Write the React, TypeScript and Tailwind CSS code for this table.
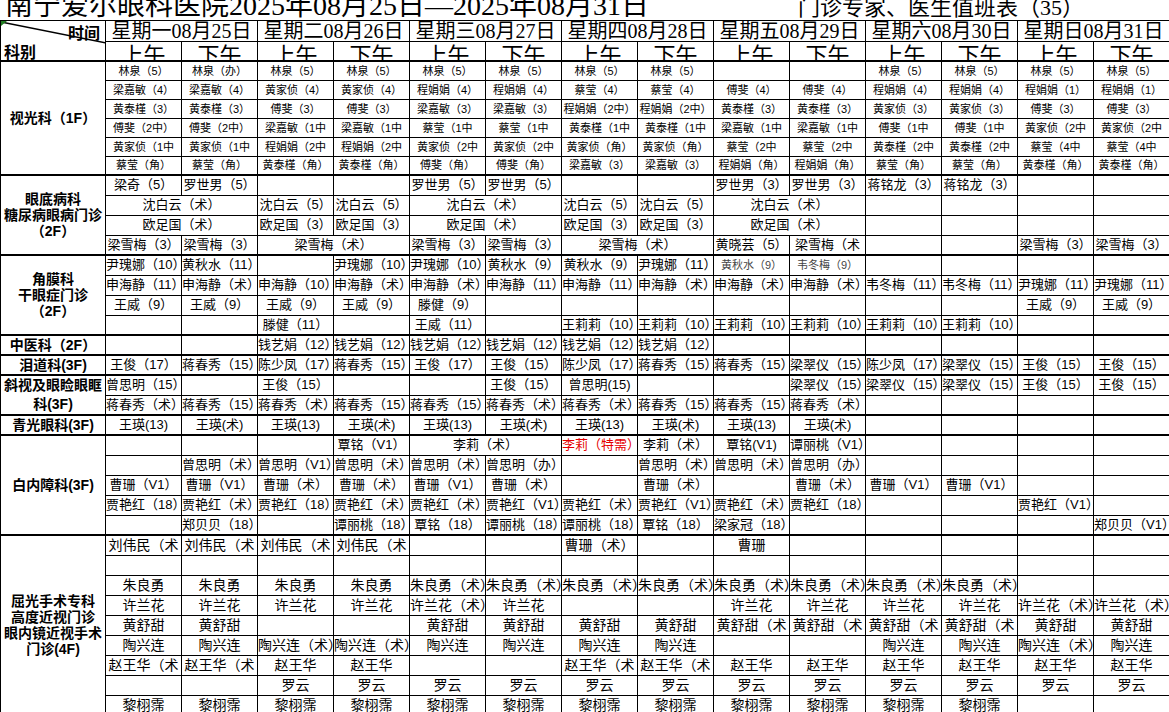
import React from 'react';
import clsx from 'clsx';

const COLS = 14;

type Cell = { t: string; span: number; red: boolean; small: boolean };

type Group = {
  label: string[];
  font: string;
  h: string;
  lead: string;
  rows: string[];
};

// "a|b|c" = one cell per slot; "*2" = spans both halves of a day; "!" = red; "~" = small grey
function parse(row: string): Cell[] {
  const out: Cell[] = [];
  let used = 0;
  for (const raw of row.split('|')) {
    let t = raw;
    let span = 1;
    let red = false;
    let small = false;
    if (t.endsWith('*2')) {
      span = 2;
      t = t.slice(0, -2);
    }
    if (t.startsWith('!')) {
      red = true;
      t = t.slice(1);
    }
    if (t.startsWith('~')) {
      small = true;
      t = t.slice(1);
    }
    out.push({ t, span, red, small });
    used += span;
  }
  while (used < COLS) {
    out.push({ t: '', span: 1, red: false, small: false });
    used++;
  }
  return out;
}

const DAYS = [
  '星期一08月25日',
  '星期二08月26日',
  '星期三08月27日',
  '星期四08月28日',
  '星期五08月29日',
  '星期六08月30日',
  '星期日08月31日',
];

const GROUPS: Group[] = [
  {
    label: ['视光科（1F）'],
    font: 'text-[11px]',
    h: 'h-[19px]',
    lead: 'leading-[16px]',
    rows: [
      '林泉（5）|林泉（办）|林泉（5）|林泉（5）|林泉（5）|林泉（5）|林泉（5）|林泉（5）|||林泉（5）|林泉（5）|林泉（5）|林泉（5）',
      '梁嘉敏（4）|梁嘉敏（4）|黄家侦（4）|黄家侦（4）|程娟娟（4）|程娟娟（4）|蔡莹（4）|蔡莹（4）|傅斐（4）|傅斐（4）|程娟娟（4）|程娟娟（4）|程娟娟（1）|程娟娟（1）',
      '黄泰槿（3）|黄泰槿（3）|傅斐（3）|傅斐（3）|梁嘉敏（3）|梁嘉敏（3）|程娟娟（2中）|程娟娟（2中）|黄泰槿（3）|黄泰槿（3）|黄家侦（3）|黄家侦（3）|傅斐（3）|傅斐（3）',
      '傅斐（2中）|傅斐（2中）|梁嘉敏（1中|梁嘉敏（1中|蔡莹（1中|蔡莹（1中|黄泰槿（1中|黄泰槿（1中|梁嘉敏（1中|梁嘉敏（1中|傅斐（1中|傅斐（1中|黄家侦（2中|黄家侦（2中',
      '黄家侦（1中|黄家侦（1中|程娟娟（2中|程娟娟（2中|黄家侦（2中|黄家侦（2中|黄家侦（角）|黄家侦（角）|蔡莹（2中|蔡莹（2中|黄泰槿（2中|黄泰槿（2中|蔡莹（4中|蔡莹（4中',
      '蔡莹（角）|蔡莹（角）|黄泰槿（角）|黄泰槿（角）|傅斐（角）|傅斐（角）|梁嘉敏（3）|梁嘉敏（3）|程娟娟（角）|程娟娟（角）|蔡莹（角）|蔡莹（角）|黄泰槿（角）|黄泰槿（角）',
    ],
  },
  {
    label: ['眼底病科', '糖尿病眼病门诊', '（2F）'],
    font: 'text-[13px]',
    h: 'h-[20px]',
    lead: 'leading-[16px]',
    rows: [
      '梁奇（5）|罗世男（5）|||罗世男（5）|罗世男（5）|||罗世男（3）|罗世男（3）|蒋铭龙（3）|蒋铭龙（3）||',
      '沈白云（术）*2|沈白云（5）|沈白云（5）|沈白云（术）*2|沈白云（5）|沈白云（5）|沈白云（术）*2||||',
      '欧足国（术）*2|欧足国（3）|欧足国（3）|欧足国（术）*2|欧足国（3）|欧足国（3）|欧足国（术）*2||||',
      '梁雪梅（3）|梁雪梅（3）|梁雪梅（术）*2|梁雪梅（3）|梁雪梅（3）|梁雪梅（术）*2|黄晓芸（5）|梁雪梅（术|||梁雪梅（3）|梁雪梅（3）',
    ],
  },
  {
    label: ['角膜科', '干眼症门诊', '（2F）'],
    font: 'text-[13px]',
    h: 'h-[20px]',
    lead: 'leading-[16px]',
    rows: [
      '尹瑰娜（10）|黄秋水（11）||尹瑰娜（10）|尹瑰娜（10）|黄秋水（9）|黄秋水（9）|尹瑰娜（11）|~黄秋水（9）|~韦冬梅（9）||||',
      '申海静（11）|申海静（术）|申海静（10）|申海静（术）|申海静（术）|申海静（11）|申海静（11）|申海静（术）|申海静（术）|申海静（术）|韦冬梅（11）|韦冬梅（11）|尹瑰娜（11）|尹瑰娜（11）',
      '王威（9）|王威（9）|王威（9）|王威（9）|滕健（9）||||||||王威（9）|王威（9）',
      '||滕健（11）||王威（11）||王莉莉（10）|王莉莉（10）|王莉莉（10）|王莉莉（10）|王莉莉（10）|王莉莉（10）||',
    ],
  },
  {
    label: ['中医科（2F）'],
    font: 'text-[13px]',
    h: 'h-[20px]',
    lead: 'leading-[16px]',
    rows: ['||钱艺娟（12）|钱艺娟（12）|钱艺娟（12）|钱艺娟（12）|钱艺娟（12）|钱艺娟（12）||||||'],
  },
  {
    label: ['泪道科(3F)'],
    font: 'text-[13px]',
    h: 'h-[20px]',
    lead: 'leading-[16px]',
    rows: [
      '王俊（17）|蒋春秀（15）|陈少凤（17）|蒋春秀（15）|王俊（17）|王俊（15）|陈少凤（17）|蒋春秀（15）|蒋春秀（15）|梁翠仪（15）|陈少凤（17）|梁翠仪（15）|王俊（15）|王俊（15）',
    ],
  },
  {
    label: ['斜视及眼睑眼眶', '科(3F)'],
    font: 'text-[13px]',
    h: 'h-[20px]',
    lead: 'leading-[19px]',
    rows: [
      '曾思明（15）||王俊（15）|||王俊（15）|曾思明(15)|||梁翠仪（15）|梁翠仪（15）|梁翠仪（15）|王俊（15）|王俊（15）',
      '蒋春秀（术）|蒋春秀（15）|蒋春秀（术）|蒋春秀（15）|蒋春秀（15）|蒋春秀（术）|蒋春秀（术）|蒋春秀（15）|蒋春秀（15）|蒋春秀（术）||||',
    ],
  },
  {
    label: ['青光眼科(3F)'],
    font: 'text-[13px]',
    h: 'h-[20px]',
    lead: 'leading-[16px]',
    rows: ['王瑛(13)|王瑛(术)|王瑛(13)|王瑛(术)|王瑛(13)|王瑛(术)|王瑛(13)|王瑛(术)|王瑛(13)|王瑛(术)||||'],
  },
  {
    label: ['白内障科(3F)'],
    font: 'text-[13px]',
    h: 'h-[20px]',
    lead: 'leading-[16px]',
    rows: [
      '|||覃铭（V1）|李莉（术）*2|!李莉（特需）|李莉（术）|覃铭(V1)|谭丽桃（V1）||||',
      '|曾思明（术）|曾思明（V1）|曾思明（术）|曾思明（术）|曾思明（办）||曾思明（术）|曾思明（术）|曾思明（办）||||',
      '曹珊（V1）|曹珊（V1）|曹珊（术）|曹珊（术）|曹珊（V1）|曹珊（术）||曹珊（术）||曹珊（术）|曹珊（V1）|曹珊（V1）||',
      '贾艳红（18）|贾艳红（术）|贾艳红（18）|贾艳红（术）|贾艳红（术）|贾艳红（V1）|贾艳红（术）|贾艳红（V1）|贾艳红（术）|贾艳红（18）|||贾艳红（V1）|',
      '|郑贝贝（18）||谭丽桃（18）|覃铭（18）|谭丽桃（18）|谭丽桃（18）|覃铭（18）|梁家冠（18）|||||郑贝贝（V1）',
    ],
  },
  {
    label: ['屈光手术专科', '高度近视门诊', '眼内镜近视手术', '门诊(4F)'],
    font: 'text-[14px]',
    h: 'h-[20px]',
    lead: 'leading-[16px]',
    rows: [
      '刘伟民（术|刘伟民（术|刘伟民（术|刘伟民（术|||曹珊（术）||曹珊|||||',
      '|||||||||||||',
      '朱良勇|朱良勇|朱良勇|朱良勇|朱良勇（术）|朱良勇（术）|朱良勇（术）|朱良勇（术）|朱良勇（术）|朱良勇（术）|朱良勇（术）|朱良勇（术）||',
      '许兰花|许兰花|许兰花|许兰花|许兰花（术）|许兰花|||许兰花|许兰花|许兰花|许兰花|许兰花（术）|许兰花（术）',
      '黄舒甜|黄舒甜|||黄舒甜|黄舒甜|黄舒甜|黄舒甜|黄舒甜（术|黄舒甜（术|黄舒甜（术|黄舒甜（术|黄舒甜|黄舒甜',
      '陶兴连|陶兴连|陶兴连（术）|陶兴连（术）|陶兴连|陶兴连|陶兴连|陶兴连|||陶兴连|陶兴连|陶兴连（术）|陶兴连',
      '赵王华（术|赵王华（术|赵王华|赵王华|||赵王华（术|赵王华（术|赵王华|赵王华|赵王华|赵王华|赵王华|赵王华',
      '||罗云|罗云|罗云|罗云|罗云|罗云|罗云|罗云|罗云|罗云|罗云|罗云',
      '黎栩霈|黎栩霈|黎栩霈|黎栩霈|黎栩霈|黎栩霈|黎栩霈|黎栩霈|黎栩霈|黎栩霈|黎栩霈|黎栩霈||',
    ],
  },
];

export default function App() {
  return (
    <div className="w-[1169px] bg-white text-black font-['Liberation_Sans','Noto_Sans_CJK_SC',sans-serif]">
      {/* Title */}
      <div className="flex h-[20px] items-start overflow-hidden whitespace-nowrap font-['Liberation_Serif','Noto_Sans_CJK_SC',serif]">
        <div className="w-[798px] pl-[5px] text-[28px] leading-[12px]">
          南宁爱尔眼科医院2025年08月25日—2025年08月31日
        </div>
        <div className="text-[22px] leading-[16px]">门诊专家、医生值班表（35）</div>
      </div>

      <table className="w-[1169px] table-fixed border-collapse">
        <colgroup>
          <col className="w-[105px]" />
          {Array.from({ length: COLS }).map((_, i) => (
            <col key={i} className="w-[76px]" />
          ))}
        </colgroup>
        <thead>
          <tr className="h-[21px]">
            <td rowSpan={2} className="relative overflow-hidden border border-b-2 border-black p-0 align-top">
              <svg className="absolute left-0 top-0" width="105" height="40" viewBox="0 0 105 40">
                <line x1="0" y1="1" x2="105" y2="22" stroke="#000" strokeWidth="1.6" />
                <polygon points="0,0 6,0 0,5" fill="#1f7a1f" />
              </svg>
              <div className="flex h-[39px] flex-col justify-between text-[16px] font-bold leading-[18px] font-['Noto_Sans_CJK_SC',sans-serif]">
                <span className="self-end pr-[5px] pt-[2px]">时间</span>
                <span className="self-start pl-[3px]">科别</span>
              </div>
            </td>
            {DAYS.map((d) => (
              <td
                key={d}
                colSpan={2}
                className="overflow-hidden whitespace-nowrap border border-black p-0 text-center text-[20px] leading-[20px] font-['Liberation_Serif','Noto_Sans_CJK_SC',serif]"
              >
                {d}
              </td>
            ))}
          </tr>
          <tr className="h-[19px]">
            {DAYS.map((d) => (
              <React.Fragment key={d}>
                <td className="overflow-hidden border border-b-2 border-black p-0 pt-[5px] text-center text-[22px] leading-[13px] font-['Noto_Sans_CJK_SC',serif]">
                  上午
                </td>
                <td className="overflow-hidden border border-b-2 border-black p-0 pt-[5px] text-center text-[22px] leading-[13px] font-['Noto_Sans_CJK_SC',serif]">
                  下午
                </td>
              </React.Fragment>
            ))}
          </tr>
        </thead>
        <tbody>
          {GROUPS.map((g, gi) =>
            g.rows.map((r, ri) => {
              const last = ri === g.rows.length - 1;
              return (
                <tr key={`${gi}-${ri}`} className={g.h}>
                  {ri === 0 && (
                    <td
                      rowSpan={g.rows.length}
                      className={clsx(
                        'border border-b-2 border-black p-0 text-center text-[14px] font-bold',
                        g.lead
                      )}
                    >
                      {g.label.map((l) => (
                        <div key={l} className="whitespace-nowrap">
                          {l}
                        </div>
                      ))}
                    </td>
                  )}
                  {parse(r).map((c, ci) => (
                    <td
                      key={ci}
                      colSpan={c.span}
                      className={clsx(
                        'overflow-hidden whitespace-nowrap border border-black p-0 text-center leading-[16px]',
                        last && 'border-b-2',
                        c.small ? 'text-[11px]' : g.font,
                        c.red ? 'text-[#e60000]' : c.small ? 'text-[#444444]' : 'text-black'
                      )}
                    >
                      {c.t}
                    </td>
                  ))}
                </tr>
              );
            })
          )}
        </tbody>
      </table>
    </div>
  );
}
